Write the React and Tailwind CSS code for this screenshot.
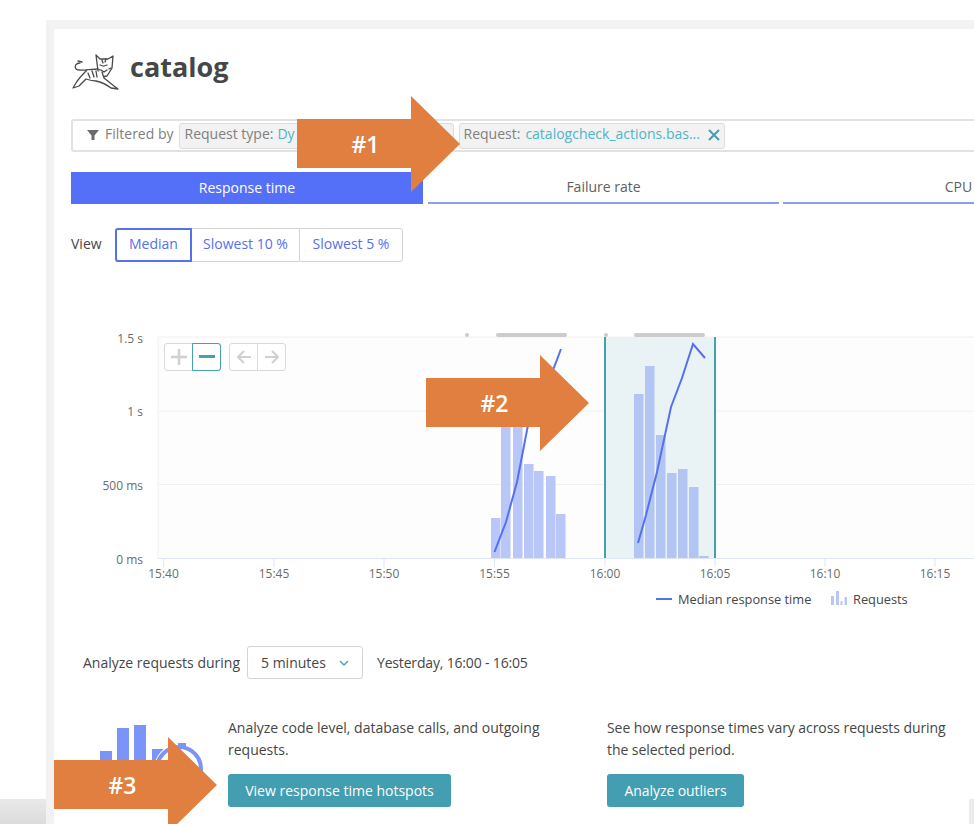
const Arrow = ({ label, className }) => (
    <div className={`absolute w-[163px] h-[96px] ${className}`}>
        <svg width="163" height="96" viewBox="0 0 163 96" className="absolute inset-0">
            <polygon points="0,23 114,23 114,0 163,48 114,96 114,72 0,72" fill="#e07f40" />
        </svg>
        <span className="absolute left-0 top-0 w-[137px] h-[96px] flex items-center justify-center text-white text-[23px] font-semibold">
            {label}
        </span>
    </div>
);

const TomcatLogo = () => (
    <svg width="50" height="38" viewBox="0 0 50 38" fill="none" stroke="#4a4a4a" strokeWidth="1.3" strokeLinejoin="round" strokeLinecap="round">
        <path d="M25 2l4 4h8l5-3-1 12-5 8-5 1-4-6z" fill="#fff" />
        <path d="M29 12l3 1M36 12l-3 1M30 17l3 2 3-2M31 7l1 3M35 6l-1 3M27 16l2 1M40 15l-2 1" />
        <path d="M9 10c-4 0-6 3-4 6 2 2 8 1 11 1 3 0 7-1 10-1" />
        <path d="M16 17c-3 3-8 8-11 13l-3 5 6-2 7-7c3 1 6 2 10 2 5 1 11 4 15 7l7 1-4-3-10-8-2-6" fill="#fff" />
        <path d="M17 20l2 5M21 18l2 6M25 18l1 6M7 8l4 1" />
    </svg>
);

const Segment = ({ children, className }) => (
    <div className={`h-full flex items-center justify-center pb-[2px] text-[#5570f0] ${className}`}>{children}</div>
);

const tickXs = [
    { x: 163.5, label: "15:40" },
    { x: 274, label: "15:45" },
    { x: 384, label: "15:50" },
    { x: 494.5, label: "15:55" },
    { x: 605, label: "16:00" },
    { x: 715, label: "16:05" },
    { x: 825, label: "16:10" },
    { x: 935, label: "16:15" },
];

const yLabels = [
    { y: 339, label: "1.5 s" },
    { y: 412, label: "1 s" },
    { y: 486, label: "500 ms" },
    { y: 560, label: "0 ms" },
];

const bars = [
    [491, 518], [501, 400], [513, 400], [524, 464], [534, 471], [546, 476], [556, 514],
    [634, 394], [645, 366], [656, 435], [667, 473], [678, 469], [689, 487], [699, 556],
];

// chart is drawn in page coordinates, offset by its own top left
const Chart = () => (
    <svg width="920" height="290" viewBox="54 325 920 290" className="block" fontFamily="'Open Sans', sans-serif">
        <rect x="158" y="337" width="816" height="221" fill="#fdfdfd" />
        <line x1="158" y1="337" x2="974" y2="337" stroke="#f0f0f0" />
        <line x1="158" y1="337" x2="158" y2="558" stroke="#f0f0f0" />
        <line x1="158" y1="411" x2="974" y2="411" stroke="#f0f0f0" />
        <line x1="158" y1="484.5" x2="974" y2="484.5" stroke="#f0f0f0" />
        <rect x="605" y="337" width="110" height="221" fill="#e9f3f5" />
        {bars.map(([x, top], index) => (
            <rect key={index} x={x} y={top} width="9.5" height={558 - top} fill={x > 600 ? "#b3c5f2" : "#b9c6f8"} />
        ))}
        <polyline points="494.5,552 506,522 517,482 528,425 553,370 561,349" fill="none" stroke="#5570f0" strokeWidth="2" />
        <polyline points="638,543 646,515 657,472 671,407 682,378 693,344 705,358" fill="none" stroke="#5570f0" strokeWidth="2" />
        <line x1="158" y1="558.5" x2="974" y2="558.5" stroke="#dfe4f7" />
        {tickXs.map((tick) => (
            <g key={tick.label}>
                <line x1={tick.x} y1="558" x2={tick.x} y2="567" stroke="#dfe4f7" />
                <text x={tick.x} y="578" textAnchor="middle" fontSize="12" fill="#6b6b6b">{tick.label}</text>
            </g>
        ))}
        {yLabels.map((item) => (
            <text key={item.label} x="143" y={item.y + 4} textAnchor="end" fontSize="12" fill="#6b6b6b">{item.label}</text>
        ))}
        <rect x="604" y="337" width="2" height="221" fill="#45a0b0" />
        <rect x="714" y="337" width="2" height="221" fill="#45a0b0" />
        <rect x="496" y="333" width="71" height="4" rx="2" fill="#cccccc" />
        <rect x="634" y="333" width="71" height="4" rx="2" fill="#cccccc" />
        <rect x="465" y="333" width="4" height="4" rx="2" fill="#cccccc" />
        <rect x="604" y="333" width="4" height="4" rx="2" fill="#cccccc" />
        <line x1="656" y1="599" x2="672" y2="599" stroke="#5570f0" strokeWidth="2" />
        <text x="678" y="604" fontSize="12.8" fill="#454646">Median response time</text>
        <g fill="#b9c6f8">
            <rect x="831" y="596" width="3" height="9" />
            <rect x="836" y="591" width="3" height="14" />
            <rect x="840.5" y="601" width="2" height="4" />
            <rect x="844.500" y="597" width="2.5" height="8" />
        </g>
        <text x="853" y="604" fontSize="12.8" fill="#454646">Requests</text>
    </svg>
);

const App = () => {
    return (
        <div className="relative w-[974px] h-[824px] overflow-hidden bg-white text-[#454646] font-['Open_Sans',sans-serif]">
            <div className="absolute left-0 bottom-0 w-[46px] h-[25px] bg-gradient-to-b from-[#e9e9e9] to-[#dcdcdc]" />
            <div className="absolute left-[46px] top-[20px] w-[928px] h-[804px] bg-[#f2f2f2] pl-2 pt-[9px]">
                <div className="w-[920px] h-[795px] bg-white pl-[17px] overflow-hidden">
                    <div className="flex items-center h-[36px] mt-[25px] gap-[9px]">
                        <TomcatLogo />
                        <h1 className="text-[27px] font-bold text-[#454646] -mt-[9px]">catalog</h1>
                    </div>

                    <div className="flex items-center w-[920px] h-[33px] mt-[29px] border-2 border-[#e2e2e2] rounded-l-[3px] pl-[14px] text-sm text-[#808080]">
                        <svg width="12" height="12" viewBox="0 0 12 12" fill="#6b6b6b" className="-mt-[2px]"><path d="M0 1h12L7.500 6.500V11h-3V6.500z" /></svg>
                        <span className="ml-[6px] mr-[5px] pb-[3px]">Filtered by</span>
                        <div className="flex items-center w-[275px] h-[26px] pl-[5px] pb-[3px] bg-[#f2f2f2] border border-[#dcdcdc] rounded-[3px]">
                            Request type: <span className="ml-1 text-[#4eb5c9]">Dy</span>
                        </div>
                        <div className="flex items-center w-[266px] h-[26px] ml-[5px] pl-[4px] pb-[3px] bg-[#f2f2f2] border border-[#dcdcdc] rounded-[3px]">
                            Request: <span className="ml-[5px] text-[#4eb5c9]">catalogcheck_actions.bas...</span>
                            <svg width="12" height="12" viewBox="0 0 12 12" className="ml-2 mt-[2px]" stroke="#429eb0" strokeWidth="2"><path d="M1 1l10 10M11 1L1 11" /></svg>
                        </div>
                    </div>

                    <div className="flex gap-[5px] w-[920px] h-[32px] mt-[20px] text-sm">
                        <div className="w-[352px] shrink-0 flex items-center justify-center bg-[#5570f8] text-white">Response time</div>
                        <div className="w-[351px] shrink-0 flex items-center justify-center border-b-2 border-[#8a9cf5] text-[#5f5f5f]">Failure rate</div>
                        <div className="w-[351px] shrink-0 -ml-px flex items-center justify-center border-b-2 border-[#8a9cf5] text-[#5f5f5f]">CPU</div>
                    </div>

                    <div className="flex items-center h-[34px] mt-[24px] text-sm">
                        <span className="w-[44px] pb-[2px]">View</span>
                        <div className="flex h-full rounded-[3px]">
                            <Segment className="w-[77px] border-2 border-[#5570f0] rounded-l-[3px]">Median</Segment>
                            <Segment className="w-[107px] border-y border-[#d4d4d4]">Slowest 10 %</Segment>
                            <Segment className="w-[104px] border border-[#d4d4d4] rounded-r-[3px]">Slowest 5 %</Segment>
                        </div>
                    </div>
                </div>
            </div>
            <div className="absolute right-0 top-[799px] w-[5px] h-[25px] bg-[#ececec]" />

            <div className="absolute left-[54px] top-[325px]">
                <Chart />
                <div className="absolute left-[110px] top-[18px] flex gap-2">
                    <div className="flex h-[28px] rounded-[3px] border border-[#d9d9d9] bg-white">
                        <div className="w-[27px] flex items-center justify-center">
                            <svg width="16" height="16" viewBox="0 0 16 16" stroke="#d0d0d0" strokeWidth="2.5"><path d="M8 0v16M0 8h16" /></svg>
                        </div>
                        <div className="w-[29px] -my-px -mr-px flex items-center justify-center border border-[#45a0b0] rounded-r-[3px]">
                            <svg width="16" height="4" viewBox="0 0 16 4"><rect width="16" height="3" fill="#45a0b0" /></svg>
                        </div>
                    </div>
                    <div className="flex h-[28px] rounded-[3px] border border-[#d9d9d9] bg-white">
                        <div className="w-[28px] flex items-center justify-center border-r border-[#d9d9d9]">
                            <svg width="14" height="14" viewBox="0 0 14 14" fill="none" stroke="#d0d0d0" strokeWidth="2"><path d="M14 7H1M7 1L1 7l6 6" /></svg>
                        </div>
                        <div className="w-[27px] flex items-center justify-center">
                            <svg width="14" height="14" viewBox="0 0 14 14" fill="none" stroke="#d0d0d0" strokeWidth="2"><path d="M0 7h13M7 1l6 6-6 6" /></svg>
                        </div>
                    </div>
                </div>
            </div>

            <div className="absolute left-[83px] top-[646px] flex items-center h-[33px] text-sm">
                <span>Analyze requests during</span>
                <div className="flex items-center justify-between w-[116px] h-[33px] ml-[7px] pl-[13px] pr-[13px] border border-[#d4d4d4] rounded-[3px]">
                    5 minutes
                    <svg width="10" height="6" viewBox="0 0 10 6" fill="none" stroke="#45a0b0" strokeWidth="1.3"><path d="M1 1l4 4 4-4" /></svg>
                </div>
                <span className="ml-[14px] tracking-[-0.17px]">Yesterday, 16:00 - 16:05</span>
            </div>

            <svg width="104" height="84" viewBox="0 0 104 84" className="absolute left-[100px] top-[725px]">
                <g fill="#7a94f8">
                    <rect x="0" y="26" width="12" height="56" />
                    <rect x="17" y="3" width="12" height="79" />
                    <rect x="34" y="0" width="12" height="82" />
                    <rect x="52" y="24" width="11" height="58" />
                </g>
                <circle cx="79" cy="44" r="25" fill="#fff" />
                <circle cx="79" cy="44" r="22" fill="#fff" stroke="#7a94f8" strokeWidth="4" />
                <rect x="78" y="18" width="8" height="3" fill="#7a94f8" />
            </svg>

            <div className="absolute left-[228px] top-[717px] w-[330px] text-sm leading-[22px]">
                <p>Analyze code level, database calls, and outgoing requests.</p>
                <button className="block mt-[13px] w-[223px] h-[33px] rounded-[3px] bg-[#429eb0] text-white">View response time hotspots</button>
            </div>
            <div className="absolute left-[607px] top-[717px] w-[350px] text-sm leading-[22px] tracking-[-0.07px]">
                <p>See how response times vary across requests during the selected period.</p>
                <button className="block mt-[13px] w-[137px] h-[33px] rounded-[3px] bg-[#429eb0] text-white">Analyze outliers</button>
            </div>

            <Arrow label="#1" className="left-[297px] top-[96px]" />
            <Arrow label="#2" className="left-[426px] top-[355px]" />
            <Arrow label="#3" className="left-[54px] top-[737px]" />
        </div>
    );
};

export default App;
